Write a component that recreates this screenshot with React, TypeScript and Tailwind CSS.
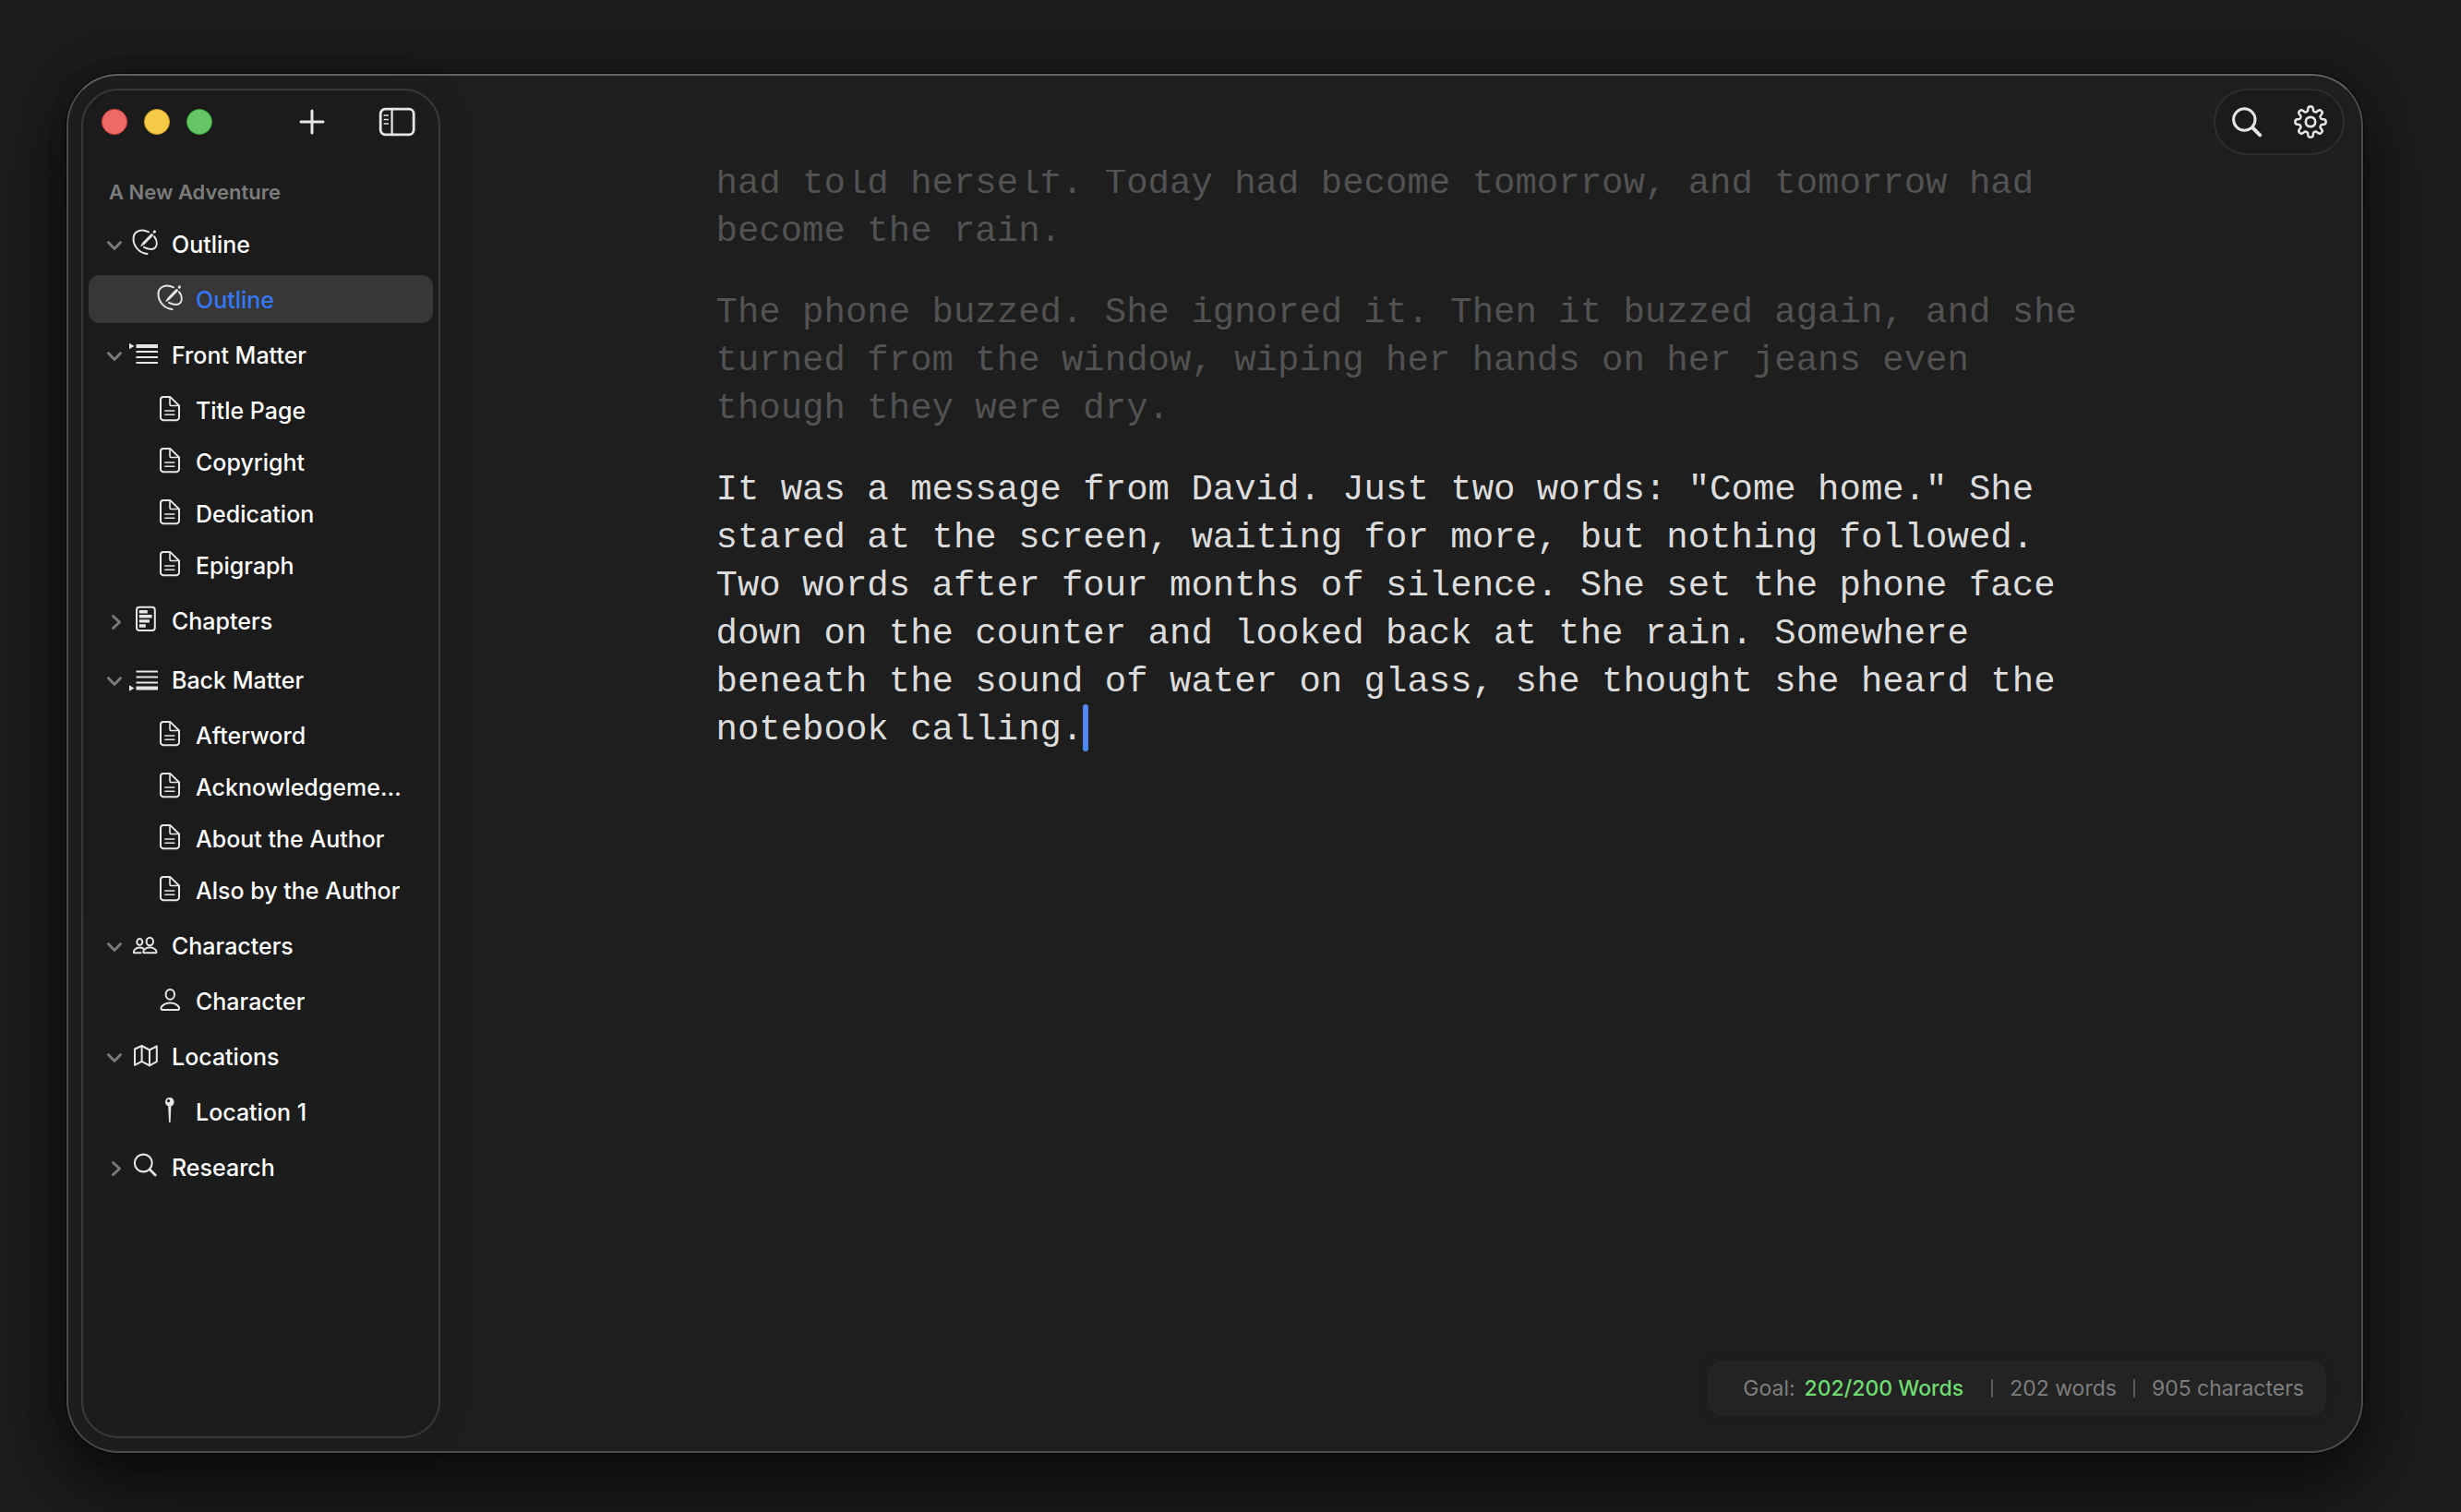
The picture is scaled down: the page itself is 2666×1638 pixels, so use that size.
import { useState, type ReactNode } from "react";

type IconName =
  | "outline"
  | "front"
  | "back"
  | "doc"
  | "chapters"
  | "people"
  | "person"
  | "map"
  | "pin"
  | "search";

const shapes: Record<IconName, ReactNode> = {
  outline: (
    <>
      <path d="M18 3.300C10-.4 1.500 2.200 1.500 10.800c0 8.400 7.200 15.700 15 16.100" />
      <path d="M24 8.200c2.600 3.500 3.700 8.300 1.800 11.300-2.200 3.200-7.500 2.900-12.800.3" />
      <path d="M12.500 15.700L21.400 6.600" strokeWidth="3" />
      <path d="M10.300 18l1.600-1.700" strokeWidth="1.800" />
      <path d="M24.200 3.200l.3-.3" strokeWidth="3" />
    </>
  ),
  front: (
    <>
      <path d="M-3 3.800v6.400l5.400-3.200z" fill="currentColor" stroke="none" />
      <path d="M4.500 7H28" strokeWidth="4" strokeLinecap="butt" />
      <path d="M4.500 13H28M4.500 19H28M4.500 25H28" strokeWidth="2" strokeLinecap="butt" />
    </>
  ),
  back: (
    <>
      <path d="M-3 22.300v6.400l5.400-3.200z" fill="currentColor" stroke="none" />
      <path d="M4.500 25.500H28" strokeWidth="4" strokeLinecap="butt" />
      <path d="M4.500 7.500H28M4.500 13.500H28M4.500 19.500H28" strokeWidth="2" strokeLinecap="butt" />
    </>
  ),
  doc: (
    <>
      <path d="M7 1.900h7.200L24 11.500v12.700a3 3 0 0 1-3 3H7a3 3 0 0 1-3-3V4.900a3 3 0 0 1 3-3z" />
      <path d="M14 2.200v7.500a1.800 1.800 0 0 0 1.800 1.800H24" strokeWidth="1.600" />
      <path d="M8.800 17h10M8.800 21.300h10" strokeWidth="1.500" />
    </>
  ),
  chapters: (
    <>
      <rect x="5" y="1.800" width="19.800" height="25.200" rx="3" />
      <path
        d="M7.800 6.700h9M7.800 11.800h13.800M7.800 16.900h11.200M7.800 22h7"
        strokeWidth="3.400"
        strokeLinecap="butt"
      />
    </>
  ),
  people: (
    <>
      <ellipse cx="8.300" cy="12.500" rx="3" ry="3.400" />
      <ellipse cx="19.300" cy="12" rx="3.700" ry="4.200" />
      <path d="M9.500 24.300H2.200c-1.300-2.300 1.800-5.700 6-5.700 1.700 0 3 .4 4.100 1.100" />
      <path d="M12.800 24.300c-2-1.800 1.600-6 6.500-6s8.700 4.200 6.600 6z" />
    </>
  ),
  person: (
    <>
      <ellipse cx="14.300" cy="9.300" rx="4.700" ry="5.400" />
      <path d="M5.600 26c-3.300-1.300.8-7.600 8.700-7.600S26.300 24.700 23 26z" />
    </>
  ),
  map: (
    <>
      <path d="M3 8.500L10.600 5l8.400 4.500L26.800 5.300v16.900L19 26.300l-8.400-4.500L3 25.800z" />
      <path d="M10.600 5v16.800M19 9.500v16.800" />
    </>
  ),
  pin: (
    <path
      d="M13.800 1a4.800 4.800 0 0 1 1.600 9.300L14.600 28h-1.500l-.9-17.700A4.800 4.800 0 0 1 13.800 1zm-1.200 2a1.600 1.600 0 1 0 0 3.200 1.600 1.600 0 0 0 0-3.200z"
      fill="currentColor"
      fillRule="evenodd"
      stroke="none"
    />
  ),
  search: (
    <>
      <circle cx="12.300" cy="12" r="9.400" strokeWidth="2.100" />
      <path d="M19.200 18.900l6 6" strokeWidth="2.800" />
    </>
  ),
};

function Icon({ name }: { name: IconName }) {
  return (
    <svg
      viewBox="0 0 28 28"
      className="mb-1 size-7 shrink-0 overflow-visible text-[#e6e6e6]"
      fill="none"
      stroke="currentColor"
      strokeWidth="2"
      strokeLinecap="round"
      strokeLinejoin="round"
      aria-hidden="true"
    >
      {shapes[name]}
    </svg>
  );
}

function Chevron({ open }: { open: boolean }) {
  return (
    <svg
      viewBox="0 0 20 20"
      className="mt-1 size-5 shrink-0 text-[#7c7c7c]"
      fill="none"
      stroke="currentColor"
      strokeWidth="2.800"
      strokeLinecap="round"
      strokeLinejoin="round"
      aria-hidden="true"
    >
      <path d={open ? "M3.400 6.500l6.600 7 6.600-7" : "M8.500 3.400l7 6.600-7 6.600"} />
    </svg>
  );
}

interface Group {
  label: string;
  icon: IconName;
  open: boolean;
  childIcon?: IconName;
  items: string[];
}

const groups: Group[] = [
  { label: "Outline", icon: "outline", open: true, childIcon: "outline", items: ["Outline"] },
  {
    label: "Front Matter",
    icon: "front",
    open: true,
    childIcon: "doc",
    items: ["Title Page", "Copyright", "Dedication", "Epigraph"],
  },
  { label: "Chapters", icon: "chapters", open: false, items: [] },
  {
    label: "Back Matter",
    icon: "back",
    open: true,
    childIcon: "doc",
    items: ["Afterword", "Acknowledgements", "About the Author", "Also by the Author"],
  },
  { label: "Characters", icon: "people", open: true, childIcon: "person", items: ["Character"] },
  { label: "Locations", icon: "map", open: true, childIcon: "pin", items: ["Location 1"] },
  { label: "Research", icon: "search", open: false, items: [] },
];

function NavGroup({
  group,
  selected,
  onSelect,
}: {
  group: Group;
  selected: string;
  onSelect: (key: string) => void;
}) {
  const [open, setOpen] = useState(group.open);
  return (
    <li>
      <button
        type="button"
        aria-expanded={open}
        onClick={() => setOpen(!open)}
        className="flex h-16 w-full items-center pl-[18px] text-left"
      >
        <Chevron open={open} />
        <span className="ml-[9px] flex h-full min-w-0 items-center gap-[15px]">
          <Icon name={group.icon} />
          <span className="mt-[3px] truncate">{group.label}</span>
        </span>
      </button>
      {open && group.childIcon && (
        <ul>
          {group.items.map((item) => {
            const key = `${group.label}/${item}`;
            const active = key === selected;
            return (
              <li key={item} className="flex h-14 items-center">
                <button
                  type="button"
                  onClick={() => onSelect(key)}
                  className={
                    active
                      ? "flex h-[52px] w-full items-center gap-[14px] rounded-xl bg-[#373737] pr-7 pl-[74px] text-left text-[#3478f6]"
                      : "flex h-[52px] w-full items-center gap-[14px] rounded-xl pr-7 pl-[74px] text-left"
                  }
                >
                  <Icon name={group.childIcon!} />
                  <span className="mt-[3px] truncate">{item}</span>
                </button>
              </li>
            );
          })}
        </ul>
      )}
    </li>
  );
}

function gearPath() {
  const steps = 240;
  const points: string[] = [];
  for (let i = 0; i < steps; i++) {
    const angle = (i / steps) * Math.PI * 2;
    const radius = 14.2 + 2.5 * Math.tanh(2.1 * Math.cos(8 * angle));
    const x = 18 + radius * Math.cos(angle);
    const y = 18 + radius * Math.sin(angle);
    points.push(`${x.toFixed(2)} ${y.toFixed(2)}`);
  }
  return `M${points.join("L")}Z`;
}

function Sidebar() {
  const [selected, setSelected] = useState("Outline/Outline");
  return (
    <aside className="flex w-[389px] shrink-0 flex-col rounded-[40px] border-2 border-[#373838] bg-linear-to-b from-[#1b1b1b] from-60% via-[#1b1d1c] via-90% to-[#1b1b1b] px-[6px] shadow-[0_0_40px_rgba(0,0,0,0.12)]">
      <div className="flex h-[68px] shrink-0 items-center pr-[19px] pl-[14px]">
        <div className="flex gap-[18px]">
          <button type="button" aria-label="Close" className="size-7 rounded-full border border-[#e0443e] bg-[#ee6a66]" />
          <button type="button" aria-label="Minimize" className="size-7 rounded-full border border-[#dea123] bg-[#f5ca46]" />
          <button type="button" aria-label="Zoom" className="size-7 rounded-full border border-[#3aab3c] bg-[#65c466]" />
        </div>
        <div className="ml-auto flex items-center gap-[58px] text-[#e6e6e6]">
          <button type="button" aria-label="Add">
            <svg viewBox="0 0 28 28" className="size-7" fill="none" stroke="currentColor" strokeWidth="3" strokeLinecap="round">
              <path d="M14 2v24M2 14h24" />
            </svg>
          </button>
          <button type="button" aria-label="Toggle sidebar">
            <svg viewBox="0 0 40 32" className="h-8 w-10" fill="none" stroke="currentColor" strokeLinecap="round">
              <rect x="2.200" y="2.200" width="36" height="27.600" rx="5" strokeWidth="2.800" />
              <path d="M14.600 2.500v27" strokeWidth="2.200" />
              <path d="M6.300 9h4M6.300 13.500h4M6.300 18h4" strokeWidth="1.700" />
            </svg>
          </button>
        </div>
      </div>
      <h1 className="mt-[18px] flex h-12 shrink-0 items-center pl-[22px] text-[22px] font-semibold text-[#7c7c7c]">
        A New Adventure
      </h1>
      <nav aria-label="Manuscript" className="text-[25px] font-medium text-white">
        <ul>
          {groups.map((group) => (
            <NavGroup key={group.label} group={group} selected={selected} onSelect={setSelected} />
          ))}
        </ul>
      </nav>
    </aside>
  );
}

function Toolbar() {
  return (
    <div className="absolute top-[14px] right-[18px] flex h-[72px] items-center gap-8 rounded-full border-2 border-[#2d2e2d] bg-[#1b1b1b] px-[17px] text-[#e6e6e6]">
      <button type="button" aria-label="Search">
        <svg viewBox="0 0 36 36" className="size-9" fill="none" stroke="currentColor" strokeWidth="3" strokeLinecap="round">
          <circle cx="14.300" cy="15.500" r="11.700" />
          <path d="M23 24.200l8.200 8.200" strokeWidth="4" />
        </svg>
      </button>
      <button type="button" aria-label="Settings">
        <svg viewBox="0 0 36 36" className="size-9" fill="none" stroke="currentColor" strokeWidth="2.500" strokeLinejoin="round">
          <path d={gearPath()} />
          <circle cx="18" cy="18" r="5.200" strokeWidth="2.700" />
        </svg>
      </button>
    </div>
  );
}

function Editor() {
  return (
    <div className="mt-[102px] min-h-0 flex-1 overflow-hidden">
      <div
        role="textbox"
        aria-multiline="true"
        aria-label="Manuscript text"
        tabIndex={0}
        className="mx-auto -mt-[11px] flex max-w-[1484px] flex-col gap-9 font-['Liberation_Mono',monospace] text-[39px] leading-[52px] text-[#525252] outline-none"
      >
        <p>had told herself. Today had become tomorrow, and tomorrow had become the rain.</p>
        <p>
          The phone buzzed. She ignored it. Then it buzzed again, and she turned from the window,
          wiping her hands on her jeans even though they were dry.
        </p>
        <p className="text-[#dcdcdc]">
          It was a message from David. Just two words: "Come home." She stared at the screen,
          waiting for more, but nothing followed. Two words after four months of silence. She set
          the phone face down on the counter and looked back at the rain. Somewhere beneath the
          sound of water on glass, she thought she heard the notebook calling.
          <span className="relative">
            <span className="absolute -top-[6px] left-0 h-[51px] w-[6px] rounded-full bg-[#4f86f7]" />
          </span>
        </p>
      </div>
    </div>
  );
}

function StatusBar() {
  return (
    <footer className="mr-[38px] mb-[38px] flex h-[60px] shrink-0 items-center self-end rounded-2xl bg-[#232323] pr-6 pl-[38px] text-[23px] text-[#7e7e7e] shadow-[0_0_16px_rgba(0,0,0,0.1)]">
      <span>Goal:</span>
      <span className="ml-[10px] font-medium text-[#6fdc72]">202/200 Words</span>
      <span className="ml-[30px] h-5 w-[2px] bg-[#5a5a5a]" />
      <span className="ml-[18px]">202 words</span>
      <span className="ml-[18px] h-5 w-[2px] bg-[#5a5a5a]" />
      <span className="ml-[18px]">905 characters</span>
    </footer>
  );
}

export default function App() {
  return (
    <div className="flex h-screen min-h-[1400px] overflow-hidden bg-[#1a1d1c] pt-[80px] pr-[106px] pb-[64px] pl-[72px] font-['Inter',sans-serif] antialiased">
      <div className="relative flex min-w-0 flex-1 rounded-[56px] border-2 border-[#4c4c4c] border-t-[#626262] bg-[#1e1e1e] p-[14px] pr-0 shadow-[0_0_0_1px_#050505,0_36px_80px_rgba(0,0,0,0.6),0_0_50px_rgba(0,0,0,0.2)]">
        <Sidebar />
        <main className="-my-[14px] flex min-w-0 flex-1 flex-col">
          <Editor />
          <StatusBar />
        </main>
        <Toolbar />
      </div>
    </div>
  );
}
